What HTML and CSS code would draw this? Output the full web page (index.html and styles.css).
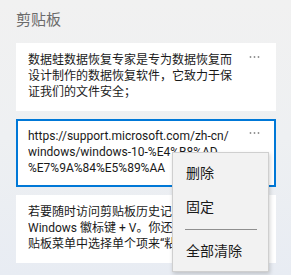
FILE: index.html
```html
<!DOCTYPE html>
<html lang="zh-CN">
<head>
<meta charset="utf-8">
<title>剪贴板</title>
<link rel="stylesheet" href="styles.css">
</head>
<body>
<div class="panel">
  <h1 class="title">剪贴板</h1>
  <div class="list">
    <div class="card">
      <div class="text">数据蛙数据恢复专家是专为数据恢复而设计制作的数据恢复软件，它致力于保证我们的文件安全；</div>
      <svg class="more" width="12" height="4" viewBox="0 0 12 4"><circle cx="1.5" cy="2" r="0.9"/><circle cx="5.5" cy="2" r="0.9"/><circle cx="9.5" cy="2" r="0.9"/></svg>
    </div>
    <div class="card selected">
      <div class="text url"><span class="ln">https://support.microsoft.com/zh-cn/</span><span class="ln">windows/windows-10-%E4%B8%AD</span><span class="ln">%E7%9A%84%E5%89%AA</span><span class="ln">%E8%B4%B4%E6%9D%BF</span></div>
      <svg class="more" width="12" height="4" viewBox="0 0 12 4"><circle cx="1.5" cy="2" r="0.9"/><circle cx="5.5" cy="2" r="0.9"/><circle cx="9.5" cy="2" r="0.9"/></svg>
    </div>
    <div class="card">
      <div class="text">若要随时访问剪贴板历史记录，请按 Windows 徽标键 + V。你还可以从剪<br>贴板菜单中选择单个项来“粘贴和固定”常用项。</div>
      <svg class="more" width="12" height="4" viewBox="0 0 12 4"><circle cx="1.5" cy="2" r="0.9"/><circle cx="5.5" cy="2" r="0.9"/><circle cx="9.5" cy="2" r="0.9"/></svg>
    </div>
  </div>
  <div class="menu">
    <div class="item">删除</div>
    <div class="item">固定</div>
    <div class="sep"></div>
    <div class="item">全部清除</div>
  </div>
</div>
</body>
</html>
```

FILE: styles.css
```css
html, body {
  margin: 0;
  padding: 0;
  height: 100%;
}
body {
  background: linear-gradient(180deg, #f1f1f1 0%, #eef0f2 50%, #e8ecf3 100%);
  font-family: Roboto, "Noto Sans CJK SC", sans-serif;
  color: #1a1a1a;
  overflow: hidden;
}
.panel {
  position: relative;
  padding: 10px 15px 0 16px;
}
.title {
  margin: 0;
  font-size: 15px;
  line-height: 20px;
  font-weight: normal;
  color: #6b6b6b;
}
.list {
  margin-top: 13px;
  display: flex;
  flex-direction: column;
  gap: 8px;
  width: 260px;
}
.card {
  background: #fff;
  height: 68px;
  box-sizing: border-box;
  padding: 9px 12px 11px 12px;
  display: flex;
  align-items: flex-start;
  overflow: hidden;
}
.card.selected {
  box-shadow: inset 0 0 0 2px #0078d7;
}
.text {
  width: 212px;
  font-size: 12px;
  line-height: 16px;
  height: 48px;
  overflow: hidden;
}
.url .ln {
  display: block;
  white-space: nowrap;
}
.more {
  display: block;
  margin-left: auto;
  margin-right: 3px;
  margin-top: 3px;
  fill: #8c8c8c;
  flex: none;
}
.menu {
  position: absolute;
  left: 172px;
  top: 152px;
  width: 97px;
  box-sizing: border-box;
  background: #f2f2f2;
  border: 1px solid #cfcfcf;
  box-shadow: 1px 2px 4px rgba(0, 0, 0, 0.18);
  padding: 3px 0;
}
.item {
  height: 34px;
  line-height: 34px;
  padding-left: 13px;
  font-size: 14px;
  color: #1a1a1a;
}
.sep {
  height: 1px;
  background: #8f8f8f;
  margin: 5px 11px 4px 12px;
}
```
